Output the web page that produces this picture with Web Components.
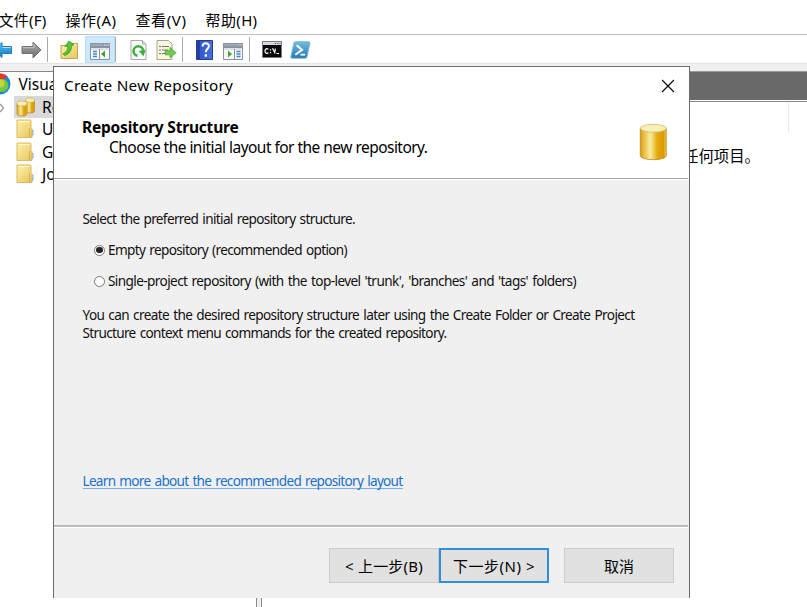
<!DOCTYPE html>
<html lang="zh-CN"><head><meta charset="utf-8"><title>Repositories</title>
<style>html,body{margin:0;background:#fff;overflow:hidden}body{font:15px/20px "Noto Sans","Noto Sans CJK SC",sans-serif;color:#000}</style></head><body>
<console-window></console-window>
<script>
const define=(name,html,ready)=>customElements.define(name,class extends HTMLElement{
  constructor(){super();this.attachShadow({mode:'open'}).innerHTML=html;}
  connectedCallback(){if(ready)ready(this);}
});

// A single text run spaced to fill the width given in "w".
define('fit-text','<style>:host{display:inline-block;white-space:pre}</style><span><slot></slot></span>',el=>{
  const w=+el.getAttribute('w'),s=el.shadowRoot.querySelector('span');
  s.style.letterSpacing='0px';
  s.style.letterSpacing=(w-s.getBoundingClientRect().width)/[...el.textContent].length+'px';
});

const cyl=(id,x,y,w,h,r)=>`<path d="M${x} ${y+r}v${h-2*r}a${w/2} ${r} 0 0 0 ${w} 0v${-(h-2*r)}z" fill="url(#${id})" stroke="#b98a2b" stroke-width=".8"/><ellipse cx="${x+w/2}" cy="${y+r}" rx="${w/2}" ry="${r}" fill="#f6f0b4" stroke="#c9a24a" stroke-width=".6"/>`;
const gold='<linearGradient id="g"><stop offset="0" stop-color="#dd9d08"/><stop offset=".12" stop-color="#e9b93a"/><stop offset=".38" stop-color="#f6eea2"/><stop offset=".66" stop-color="#e6a90c"/><stop offset=".9" stop-color="#dd9a00"/><stop offset="1" stop-color="#f0cf68"/></linearGradient>';
const svg=(w,h,body)=>`<svg width="${w}" height="${h}" viewBox="0 0 ${w} ${h}"><defs>${gold}
<linearGradient id="b" x2="0" y2="1"><stop stop-color="#58c5f7"/><stop offset="1" stop-color="#0877c2"/></linearGradient>
<linearGradient id="k" x2="0" y2="1"><stop stop-color="#aaa"/><stop offset="1" stop-color="#6e6e6e"/></linearGradient>
<linearGradient id="f" x2="1" y2="1"><stop stop-color="#fff2ac"/><stop offset="1" stop-color="#e7c45d"/></linearGradient>
<linearGradient id="q" x2="1"><stop stop-color="#1c3b9f"/><stop offset=".2" stop-color="#3159c8"/><stop offset="1" stop-color="#496ee0"/></linearGradient>
<linearGradient id="p" x2="0" y2="1"><stop stop-color="#73bce2"/><stop offset="1" stop-color="#2379b4"/></linearGradient></defs>${body}</svg>`;
const win='<path d="M.5 1.5h19v16H.5z" fill="#f7f8f9" stroke="#8a929f"/><path d="M0 1h20v5H0z" fill="#8b94a3"/><path d="M1 3h12" stroke="#b4bbc6"/><path d="M14 3h1.3m1 0h1.3m.6 0h1" stroke="#f4f4f4"/><path d="M1 7h18" stroke="#c8ccd2"/>';
const icons={
 back:svg(20,18,'<path d="M1 2h10V-1z" fill="none"/><path d="M1 5.500h10V1l8 8-8 8v-4.500H1z" fill="none"/><path d="M2 9 10 1.500v4h9.500v7H10v4z" fill="url(#b)" stroke="#247bb5"/><path d="M10.500 6.500H19" stroke="#a7e0fb"/>'),
 forward:svg(21,18,'<path d="M20 9 12 1v4.500H1v7h11V17z" fill="url(#k)" stroke="#737373"/><path d="M2 6.700h11V3.500" stroke="#c6c6c6" fill="none"/>'),
 up:svg(19,20,'<path d="M1 5.500h6l1-2h9.500v15H1z" fill="url(#f)" stroke="#c9a349"/><path d="M12 4.500h4" stroke="#fff8d0"/><path d="M3 13.800c3.500-1.500 5-4 4.500-7.800L4.800 6.500 9 1l5 4-2.700.4c.7 5-2.300 8.800-6.800 10z" fill="#58c52d" stroke="#36992a" stroke-width=".8"/>'),
 tree:svg(20,18,win+'<path d="M9.500 7v10" stroke="#8a929f"/><path d="M3 9.500h4m-4 2.500h4m-4 2.500h4" stroke="#4587c5" stroke-width="1.300"/><path d="M15 8.500v7L11 12z" fill="#3ca831"/>'),
 refresh:svg(17,20,'<path d="M1 .5h11.500l3.500 3.500v15.500H1z" fill="#fbfbfb" stroke="#a9a9a9"/><path d="M12.500.5V4H16" fill="#ddd" stroke="#aaa"/><path d="M7.500 15.800a4.800 4.800 0 1 1 5.600-5.200" fill="none" stroke="#3fae3c" stroke-width="2.500"/><path d="m8.700 11 7-1.200-2.200 6.500z" fill="#3fae3c"/>'),
 export:svg(21,20,'<path d="M1 .5h11.500l3.500 3.500v15.500H1z" fill="#fcf7dc" stroke="#aaa48e"/><path d="M3 6.500h2m1 0h7M3 10h2m1 0h6M3 13.500h2m1 0h6" stroke="#6f7680" stroke-width="1.200"/><path d="M9 10.500h5V7.300l6.200 5.500-6.200 5v-3H9z" fill="#70cc4e" stroke="#44a036" stroke-width=".7"/>'),
 help:svg(17,20,'<path d="M.5.5h16v19H.5z" fill="url(#q)" stroke="#243d8d"/><path d="M3 1v18" stroke="#182f83"/><path d="M6.500 6.500c.2-4.300 6.600-4.300 6.400-.3-.1 2.500-3.100 2.800-3.100 6" fill="none" stroke="#fff" stroke-width="2"/><path d="M8.700 14.300h2.300v2.400H8.700z" fill="#fff"/>'),
 action:svg(20,18,win+'<path d="M11.500 7v10" stroke="#8a929f"/><path d="M13.500 9.500h4m-4 2.500h4m-4 2.500h4" stroke="#4587c5" stroke-width="1.300"/><path d="M5 8.500v7L9 12z" fill="#3ca831"/>'),
 cmd:svg(20,17,'<path d="M.5.5h19v16H.5z" fill="#080808" stroke="#777c84"/><path d="M1 1h18v3H1z" fill="#d5d9e2"/><path d="M12.500 2.500h1.500m1 0h1.500m1 0h1" stroke="#555f82"/><path d="M6.300 8.300C5.200 7.200 3 7.700 3 10s2.200 3 3.300 1.700M8.500 8.200v1.300m0 1.500v1.200M10.500 7.300l2.700 5.200m1.300 0h2.500M13.200 7.500v3" fill="none" stroke="#fff" stroke-width="1.200"/>'),
 ps:svg(21,18,'<path d="M5.500.7h13.300q1.500 0 1.200 1.500l-3 13.600q-.3 1.500-1.800 1.500H2q-1.500 0-1.200-1.500L3.800 2.200Q4.100.7 5.500.7z" fill="url(#p)" stroke="#85b9d6"/><path d="m6.700 4.200 5.400 4.700-6.800 4.900" fill="none" stroke="#fff" stroke-width="2"/><path d="M10.500 13.700h4.700" stroke="#fff" stroke-width="1.700"/>'),
 logo:svg(24,22,'<circle cx="12" cy="11" r="10.500" fill="#1788dd"/><path d="M2 8A10.500 10.500 0 0 1 19.500 3.500L13 8z" fill="#e33c2d"/><circle cx="14" cy="12.500" r="6.500" fill="#72c642"/><circle cx="12.500" cy="10.500" r="4" fill="#c8d63a"/>'),
 repos:svg(20,20,cyl('g',9.5,1,9,15,2.2)+cyl('g',1,4,10,15,2.5)),
 folder:svg(19,20,'<path d="M1 1h13q1 0 1 1v6.500l1 1V18.500H1z" fill="url(#f)" stroke="#dfb95f"/><path d="M13.500 9v9" stroke="#d9b254"/><path d="M16 11.500h1v4.500h-1.500" stroke="#7cabc4" fill="none"/><path d="M2.500 2.500h11" stroke="#fff9d5"/>'),
 cylinder:svg(29,38,cyl('g',1.3,1.3,26,35.4,4)),
 close:svg(14,14,'<path d="m1 1 12 12M13 1 1 13" stroke="#000" stroke-width="1.100"/>')
};
define('app-icon','<style>:host{display:block;flex:none}svg{display:block}</style><span></span>',el=>{el.shadowRoot.querySelector('span').innerHTML=icons[el.getAttribute('name')]||'';});

define('menu-bar',`<style>:host{display:flex;height:35px;box-sizing:border-box;padding-top:10px;gap:19px;margin-left:-1.500px;border-bottom:1px solid #bfbfc6}</style>
<fit-text w="48">文件(F)</fit-text><fit-text w="51">操作(A)</fit-text><fit-text w="51">查看(V)</fit-text><fit-text w="52">帮助(H)</fit-text>`);

define('tool-bar',`<style>:host{display:flex;height:29px;align-items:center;padding-top:1px;box-sizing:border-box;border-bottom:1px solid #e3e3e3;overflow:hidden}
i{width:1px;height:25px;background:#aaa}.on{background:#cce8ff;outline:1px solid #b5dcf8;outline-offset:-1px;width:30px;height:27px;display:grid;place-items:center}.on app-icon{margin-top:2px}</style>
<app-icon name="back" style="margin-left:-8px"></app-icon><app-icon name="forward" style="margin-left:9px"></app-icon><i style="margin-left:5px"></i>
<app-icon name="up" style="margin-left:12px"></app-icon><div class="on" style="margin-left:6px"><app-icon name="tree"></app-icon></div><i style="margin-left:0"></i>
<app-icon name="refresh" style="margin-left:14px"></app-icon><app-icon name="export" style="margin-left:9px"></app-icon><i style="margin-left:5px"></i>
<app-icon name="help" style="margin-left:13px"></app-icon><app-icon name="action" style="margin:2px 0 0 10px"></app-icon><i style="margin-left:6px"></i>
<app-icon name="cmd" style="margin-left:12px"></app-icon><app-icon name="ps" style="margin-left:8px"></app-icon>`);

define('tree-item',`<style>:host{display:flex;height:22.5px;align-items:center;gap:5px;padding-left:16px}:host([selected]){background:linear-gradient(#d9d9d9,#d9d9d9) 14px 0 no-repeat}:host([root]){padding-left:0;margin-left:-12px;gap:6.500px}
b{margin:0 3px 0 -17px;width:9px}:host(:not([selected])) b{display:none}app-icon{width:21px}:host([root]) app-icon{width:24px}</style>
<b><svg width="7" height="10" viewBox="0 0 7 10"><path d="m1 1 3.500 4L1 9" fill="none" stroke="#999" stroke-width="1.200"/></svg></b><app-icon></app-icon><span><slot></slot></span>`,el=>{
 const i=el.shadowRoot.querySelector('app-icon');i.setAttribute('name',el.getAttribute('icon'));i.connectedCallback();});

define('nav-tree',`<style>:host{display:block;width:257px;height:545px;border-top:1px solid #85898f;border-right:1px solid #85898f;padding-top:1px;box-sizing:border-box;background:#fff;font-size:15.5px}</style>
<tree-item root icon="logo">Visua</tree-item><tree-item selected icon="repos">Re</tree-item><tree-item icon="folder">U</tree-item><tree-item icon="folder">G</tree-item><tree-item icon="folder">Jo</tree-item>`);

define('result-pane',`<style>:host{display:block;flex:1;background:#fff;border-left:1px solid #85898f;margin-left:4px;border-top:1px solid #999}
.head{height:28px;background:#696969}.edge{height:1px;margin-top:1px;background:#7b8792}.col{height:30px;margin-left:526px;border-left:1px solid #e8e8e8;margin-top:1px}.msg{margin:12px 0 0 421px;font:15.4px/20px "Noto Sans CJK SC",sans-serif}</style>
<div class="head"></div><div class="edge"></div><div class="col"></div><div class="msg">任何项目。</div>`);

define('radio-option',`<style>:host{display:flex;align-items:center;gap:3px;height:20px}i{box-sizing:border-box;width:11px;height:11px;border:1px solid #777;border-radius:50%;background:#fff;display:grid;place-items:center}:host([checked]) i::after{content:"";width:6.5px;height:6.5px;border-radius:50%;background:#222}</style><i></i><slot></slot>`);
define('push-button',`<style>:host{display:grid;place-items:center;box-sizing:border-box;height:35px;width:110px;background:#e1e1e1;border:1px solid #cbcbcb;font-size:15px}:host([primary]){border:2px solid #2e8fdf}</style><slot></slot>`);

define('wizard-dialog',`<style>
:host{display:block;box-sizing:border-box;background:#f0f0f0;border:1px solid #6a6a6a;border-bottom:0;overflow:hidden}
.top{background:#fff;height:111px}.title{display:flex;justify-content:space-between;align-items:flex-start;padding:8px 14px 0 10px;font-size:15.3px}.title app-icon{margin-top:4px}
.banner{display:flex;justify-content:space-between;padding:22px 21px 0 28px}.banner app-icon{margin-top:6px}
h1,p{margin:0}h1{font-size:15.5px;line-height:20px}.sub{padding-left:27px;font-size:15.5px}
.rule{height:2px;background:#bcbcbc;border-bottom:1px solid #fff;margin-right:1px}.rule.a{height:1px;background:#a5a5a5}
.body{box-sizing:border-box;height:345px;padding:30px 29px 0 28.500px;font-size:13.6px;line-height:18px;word-spacing:1.200px;display:flex;flex-direction:column;align-items:flex-start;color:#111}
.r1{margin:12px 0 0 11.500px}.r2{margin:11px 0 0 11.500px}.note{margin:15px 0 0;display:grid}
.link{color:#1a70cc;margin-top:131px;border-bottom:1px solid #75b0ea;line-height:16px;height:15px}
.buttons{display:flex;padding:20px 15px 0;justify-content:flex-end}
</style>
<div class="top"><div class="title"><fit-text w="169">Create New Repository</fit-text><app-icon name="close"></app-icon></div>
<div class="banner"><div><h1><fit-text w="156.500">Repository Structure</fit-text></h1><p class="sub"><fit-text w="318.500">Choose the initial layout for the new repository.</fit-text></p></div><app-icon name="cylinder"></app-icon></div></div>
<div class="rule a"></div>
<div class="body"><fit-text w="272.500">Select the preferred initial repository structure.</fit-text>
<radio-option class="r1" checked><fit-text w="239">Empty repository (recommended option)</fit-text></radio-option>
<radio-option class="r2"><fit-text w="468">Single-project repository (with the top-level 'trunk', 'branches' and 'tags' folders)</fit-text></radio-option>
<p class="note"><fit-text w="552">You can create the desired repository structure later using the Create Folder or Create Project</fit-text><fit-text w="364">Structure context menu commands for the created repository.</fit-text></p>
<fit-text class="link" w="320">Learn more about the recommended repository layout</fit-text></div>
<div class="rule"></div>
<div class="buttons"><push-button><fit-text w="78">&lt; 上一步(B)</fit-text></push-button><push-button primary><fit-text w="82">下一步(N) &gt;</fit-text></push-button><push-button style="margin-left:15px"><fit-text w="30">取消</fit-text></push-button></div>`);

define('console-window',`<style>:host{display:block;position:relative;width:807px;height:607px;overflow:hidden;background:#fff}
.work{display:flex;background:#f0f0f0;padding-top:7px;height:545px}wizard-dialog{position:absolute;left:53px;top:66px;width:637px;height:532px}</style>
<menu-bar></menu-bar><tool-bar></tool-bar><div class="work"><nav-tree></nav-tree><result-pane></result-pane></div><wizard-dialog></wizard-dialog>`);
</script></body></html>
